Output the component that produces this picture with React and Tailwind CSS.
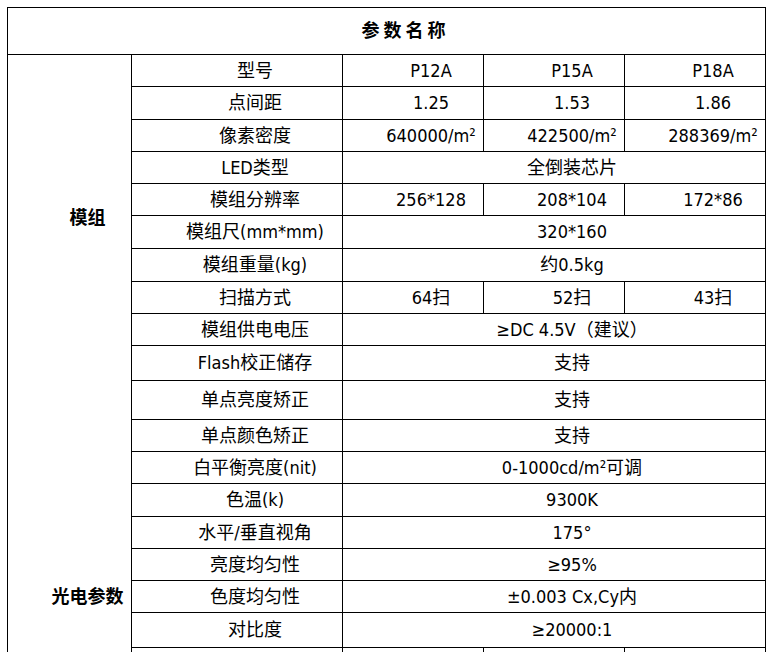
import React from "react";

const rows = [
  { label: "型号", vals: ["P12A", "P15A", "P18A"] },
  { label: "点间距", vals: ["1.25", "1.53", "1.86"] },
  { label: "像素密度", vals: ["640000/m²", "422500/m²", "288369/m²"] },
  { label: "LED类型", val: "全倒装芯片" },
  { label: "模组分辨率", vals: ["256*128", "208*104", "172*86"] },
  { label: "模组尺(mm*mm)", val: "320*160" },
  { label: "模组重量(kg)", val: "约0.5kg" },
  { label: "扫描方式", vals: ["64扫", "52扫", "43扫"] },
  { label: "模组供电电压", val: "≥DC 4.5V（建议）" },
  { label: "Flash校正储存", val: "支持" },
];

const rows2 = [
  { label: "单点亮度矫正", val: "支持" },
  { label: "单点颜色矫正", val: "支持" },
  { label: "白平衡亮度(nit)", val: "0-1000cd/m²可调" },
  { label: "色温(k)", val: "9300K" },
  { label: "水平/垂直视角", val: "175°" },
  { label: "亮度均匀性", val: "≥95%" },
  { label: "色度均匀性", val: "±0.003 Cx,Cy内" },
  { label: "对比度", val: "≥20000:1" },
  { label: "刷新率(Hz)", vals: ["3840", "3840", "3840"] },
  { label: "灰度等级", val: "14bit-16bit" },
  { label: "最大功耗(W/m²)", val: "≤600" },
  { label: "平均功耗(W/m²)", val: "≤200" },
  { label: "工作电压", val: "AC 110-240V" },
];

const cell =
  "flex items-center justify-center pl-[36px] border-r border-b border-black whitespace-nowrap";

function Row({ r }) {
  return (
    <>
      <div className={cell}>{r.label}</div>
      {r.vals ? (
        r.vals.map((v, i) => (
          <div key={i} className={cell}>
            {v}
          </div>
        ))
      ) : (
        <div className={cell + " col-span-3"}>{r.val}</div>
      )}
    </>
  );
}

export default function App() {
  return (
    <div className="bg-white min-h-screen pt-[7px] pl-[7px]">
      <div
        className="grid w-[759px] border-l border-t border-black text-black text-[18px] leading-none grid-cols-[124px_211px_141px_141px_141px] grid-rows-[47px_32px_33px_32px_32px_32px_33px_33px_32px_32px_35px_39px_32px_32px_33px_32px_32px_32px_35px_33px_33px_33px_33px_33px]"
        style={{ fontFamily: "'DejaVu Sans Condensed','Noto Sans','Noto Sans CJK SC',sans-serif" }}
      >
        <div className="col-span-5 flex items-center justify-center pl-[38px] border-r border-b border-black font-bold tracking-[4px]">
          参数名称
        </div>
        <div className="row-span-10 flex items-center justify-center pl-[36px] border-r border-black font-bold">
          模组
        </div>
        {rows.map((r, i) => (
          <Row key={i} r={r} />
        ))}
        <div className="row-span-13 flex items-center justify-center pl-[36px] border-r border-b border-black font-bold">
          光电参数
        </div>
        {rows2.map((r, i) => (
          <Row key={i} r={r} />
        ))}
      </div>
    </div>
  );
}
